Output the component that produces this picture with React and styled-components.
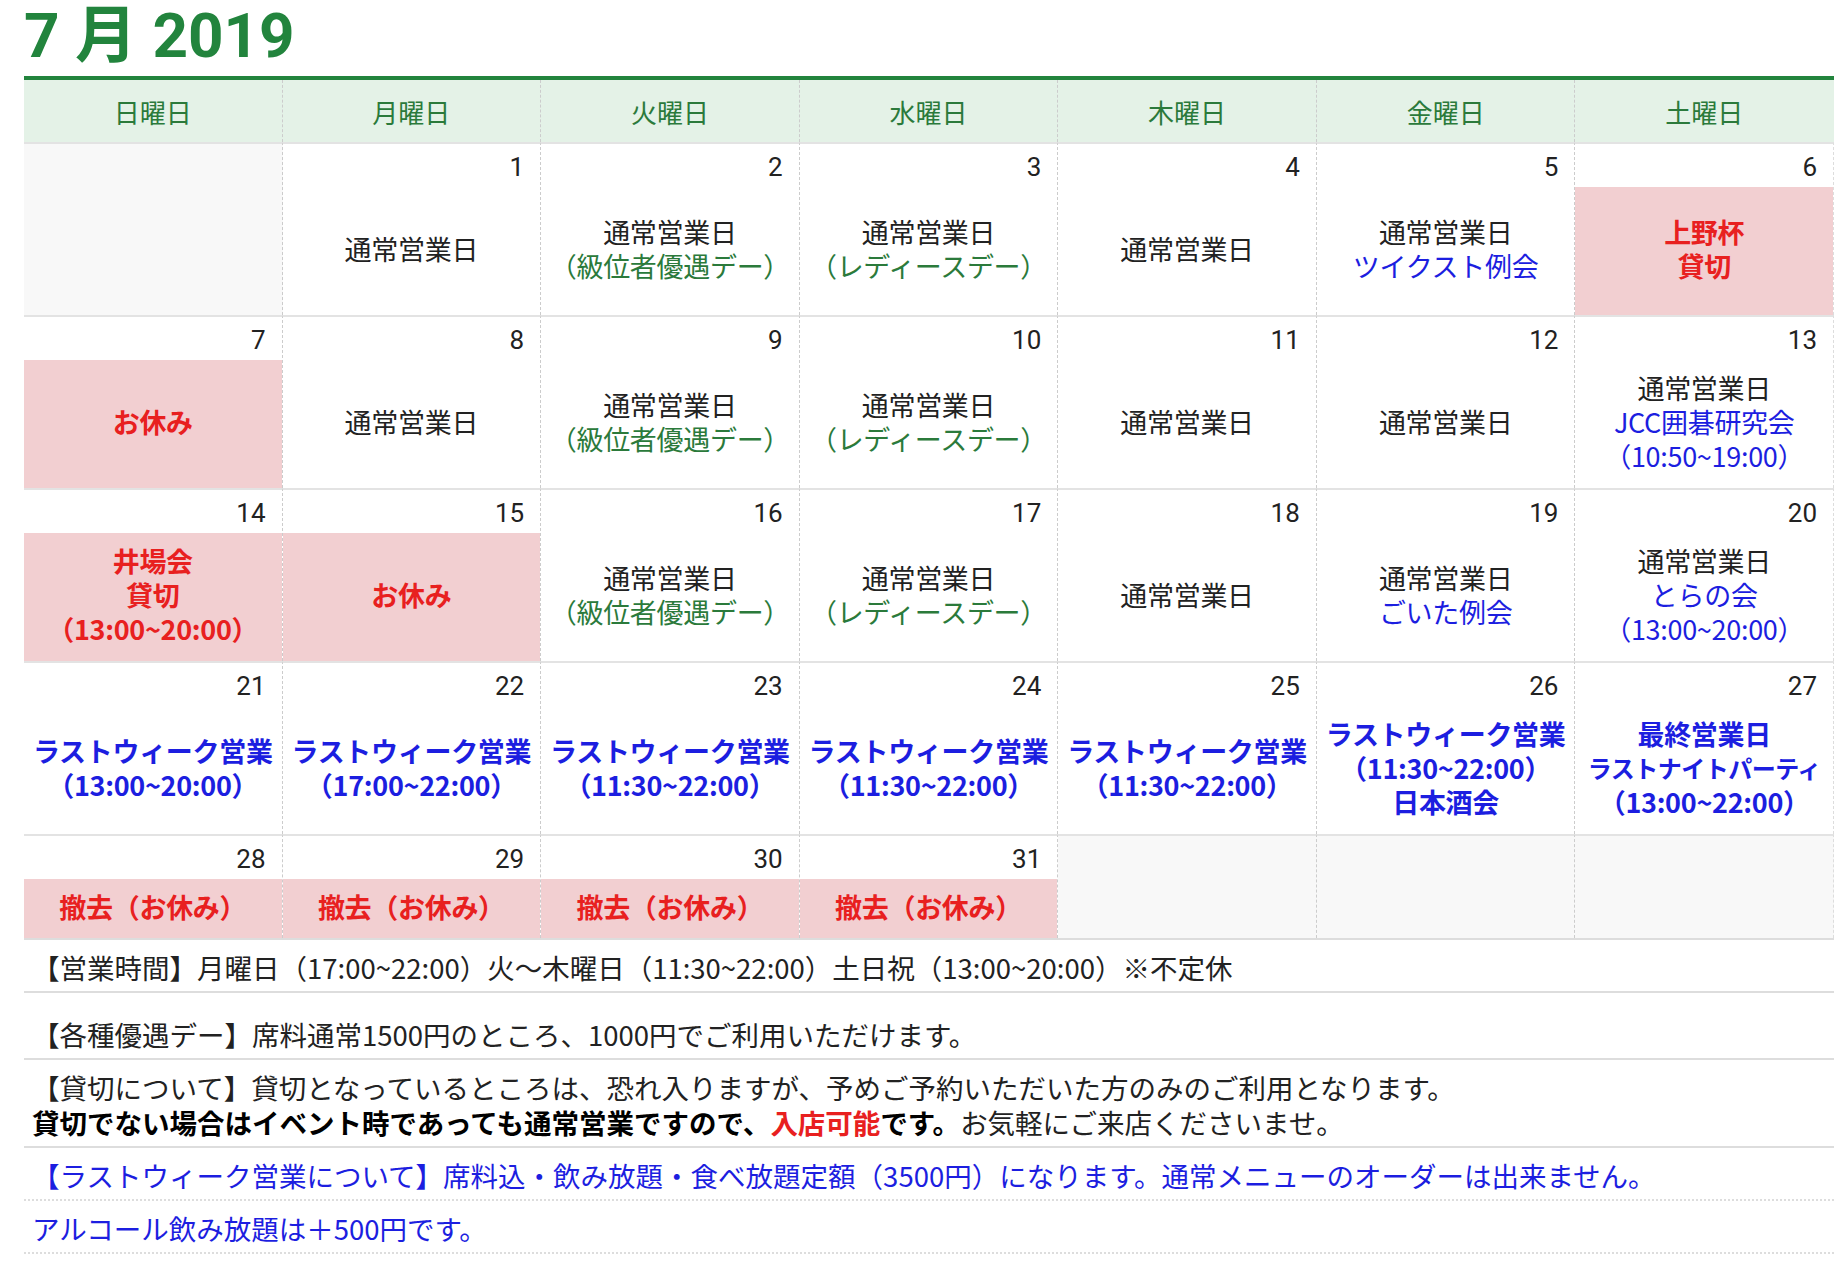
import styled, { createGlobalStyle } from "styled-components";

const GlobalStyle = createGlobalStyle`
  body {
    margin: 0;
    background: #fff;
    font-family: "Noto Sans CJK JP", "Noto Sans", sans-serif;
  }
`;

const N = "n", G = "g", B = "b", R = "r";

const weeks = [
  [
    null,
    { d: 1, lines: [[N, "通常営業日"]] },
    { d: 2, lines: [[N, "通常営業日"], [G, "（級位者優遇デー）"]] },
    { d: 3, lines: [[N, "通常営業日"], [G, "（レディースデー）"]] },
    { d: 4, lines: [[N, "通常営業日"]] },
    { d: 5, lines: [[N, "通常営業日"], [B, "ツイクスト例会"]] },
    { d: 6, pink: true, bold: true, lines: [[R, "上野杯"], [R, "貸切"]] },
  ],
  [
    { d: 7, pink: true, bold: true, lines: [[R, "お休み"]] },
    { d: 8, lines: [[N, "通常営業日"]] },
    { d: 9, lines: [[N, "通常営業日"], [G, "（級位者優遇デー）"]] },
    { d: 10, lines: [[N, "通常営業日"], [G, "（レディースデー）"]] },
    { d: 11, lines: [[N, "通常営業日"]] },
    { d: 12, lines: [[N, "通常営業日"]] },
    { d: 13, lines: [[N, "通常営業日"], [B, "JCC囲碁研究会"], [B, "（10:50~19:00）"]] },
  ],
  [
    { d: 14, pink: true, bold: true, lines: [[R, "井場会"], [R, "貸切"], [R, "（13:00~20:00）"]] },
    { d: 15, pink: true, bold: true, lines: [[R, "お休み"]] },
    { d: 16, lines: [[N, "通常営業日"], [G, "（級位者優遇デー）"]] },
    { d: 17, lines: [[N, "通常営業日"], [G, "（レディースデー）"]] },
    { d: 18, lines: [[N, "通常営業日"]] },
    { d: 19, lines: [[N, "通常営業日"], [B, "ごいた例会"]] },
    { d: 20, lines: [[N, "通常営業日"], [B, "とらの会"], [B, "（13:00~20:00）"]] },
  ],
  [
    { d: 21, bold: true, lines: [[B, "ラストウィーク営業"], [B, "（13:00~20:00）"]] },
    { d: 22, bold: true, lines: [[B, "ラストウィーク営業"], [B, "（17:00~22:00）"]] },
    { d: 23, bold: true, lines: [[B, "ラストウィーク営業"], [B, "（11:30~22:00）"]] },
    { d: 24, bold: true, lines: [[B, "ラストウィーク営業"], [B, "（11:30~22:00）"]] },
    { d: 25, bold: true, lines: [[B, "ラストウィーク営業"], [B, "（11:30~22:00）"]] },
    { d: 26, bold: true, lines: [[B, "ラストウィーク営業"], [B, "（11:30~22:00）"], [B, "日本酒会"]] },
    { d: 27, bold: true, lines: [[B, "最終営業日"], [B, "ラストナイトパーティ", true], [B, "（13:00~22:00）"]] },
  ],
  [
    { d: 28, pink: true, bold: true, lines: [[R, "撤去（お休み）"]] },
    { d: 29, pink: true, bold: true, lines: [[R, "撤去（お休み）"]] },
    { d: 30, pink: true, bold: true, lines: [[R, "撤去（お休み）"]] },
    { d: 31, pink: true, bold: true, lines: [[R, "撤去（お休み）"]] },
    null, null, null,
  ],
];

const days = ["日曜日", "月曜日", "火曜日", "水曜日", "木曜日", "金曜日", "土曜日"];
const colors = { n: "#222", g: "#2b7a3b", b: "#1c1ee0", r: "#e8201f" };

export default function App() {
  return (
    <Page>
      <GlobalStyle />
      <Title>7 月 2019</Title>
      <Grid>
        {days.map((d, i) => (
          <Head key={d} last={i === 6}>{d}</Head>
        ))}
        {weeks.map((w, wi) =>
          w.map((c, i) =>
            c ? (
              <Cell key={`${wi}-${i}`} last={i === 6} short={wi === 4}>
                <DayNum>{c.d}</DayNum>
                <Body pink={c.pink}>
                  {c.lines.map(([t, s, narrow], li) => (
                    <Line key={li} color={colors[t]} bold={c.bold} narrow={narrow}>
                      {s}
                    </Line>
                  ))}
                </Body>
              </Cell>
            ) : (
              <Empty key={`${wi}-${i}`} last={i === 6} short={wi === 4} />
            )
          )
        )}
      </Grid>
      <Notes>
        <Note>【営業時間】月曜日（17:00~22:00）火〜木曜日（11:30~22:00）土日祝（13:00~20:00）※不定休</Note>
        <Note tall>【各種優遇デー】席料通常1500円のところ、1000円でご利用いただけます。</Note>
        <Note>
          【貸切について】貸切となっているところは、恐れ入りますが、予めご予約いただいた方のみのご利用となります。
          <br />
          <Strong>
            貸切でない場合はイベント時であっても通常営業ですので、<Red>入店可能</Red>です。
          </Strong>
          お気軽にご来店くださいませ。
        </Note>
        <Note blue dotted>【ラストウィーク営業について】席料込・飲み放題・食べ放題定額（3500円）になります。通常メニューのオーダーは出来ません。</Note>
        <Note blue dotted>アルコール飲み放題は＋500円です。</Note>
      </Notes>
    </Page>
  );
}

const Page = styled.div`
  padding: 0 0 0 24px;
  width: 1810px;
`;

const Title = styled.h1`
  margin: 0;
  padding-top: 2px;
  height: 74px;
  font-family: Roboto, "Noto Sans CJK JP", sans-serif;
  font-size: 62px;
  font-weight: 700;
  color: #22843d;
  line-height: 68px;
`;

const Grid = styled.div`
  display: grid;
  grid-template-columns: repeat(7, 1fr);
  border-top: 4px solid #22843d;
  border-bottom: 2px solid #ddd;
`;

const Head = styled.div`
  height: 62px;
  background: #e4f2e7;
  color: #2b7a3b;
  font-size: 26px;
  display: flex;
  align-items: center;
  justify-content: center;
  border-right: 1px dashed ${({ last }) => (last ? "transparent" : "#ccc")};
`;

const Cell = styled.div`
  height: ${({ short }) => (short ? 102 : 171)}px;
  display: flex;
  flex-direction: column;
  border-top: 2px solid #e3e3e3;
  border-right: 1px dashed ${({ last }) => (last ? "#ddd" : "#ccc")};
`;

const Empty = styled(Cell)`
  background: #f8f8f8;
`;

const DayNum = styled.div`
  height: 43px;
  flex: none;
  text-align: right;
  padding-right: 16px;
  font-family: Roboto, sans-serif;
  font-size: 26px;
  line-height: 46px;
  color: #222;
`;

const Body = styled.div`
  flex: 1;
  display: flex;
  flex-direction: column;
  justify-content: center;
  align-items: center;
  background: ${({ pink }) => (pink ? "#f2cfd1" : "transparent")};
  padding-bottom: 4px;
`;

const Line = styled.div`
  color: ${({ color }) => color};
  font-weight: ${({ bold }) => (bold ? 700 : 400)};
  font-size: ${({ narrow }) => (narrow ? 24 : 27)}px;
  line-height: 34px;
  white-space: nowrap;
  letter-spacing: ${({ narrow }) => (narrow ? "-0.5px" : "-0.3px")};
`;

const Notes = styled.div`
  display: flex;
  flex-direction: column;
`;

const Note = styled.div`
  padding: ${({ tall }) => (tall ? "24px" : "10px")} 8px 6px 8px;
  font-size: 27.5px;
  line-height: 35px;
  color: ${({ blue }) => (blue ? "#1c1ee0" : "#222")};
  border-bottom: 2px ${({ dotted }) => (dotted ? "dotted #ddd" : "solid #ddd")};
`;

const Strong = styled.b`
  font-weight: 700;
  color: #000;
`;

const Red = styled.span`
  color: #e8201f;
`;
